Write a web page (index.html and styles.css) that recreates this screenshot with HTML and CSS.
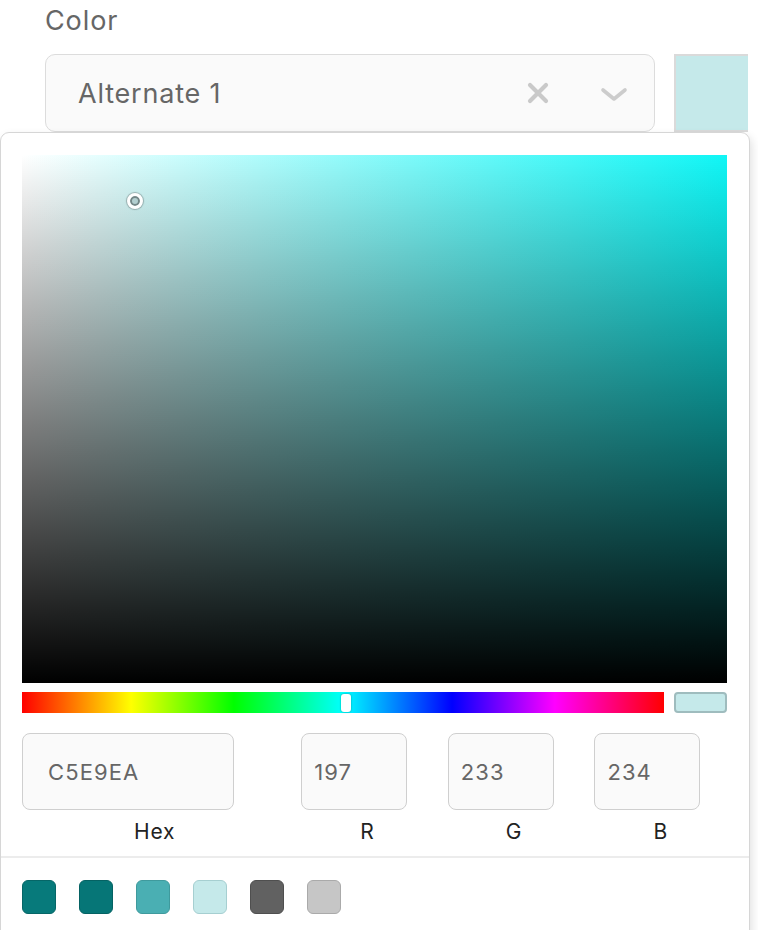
FILE: index.html
```html
<!DOCTYPE html>
<html lang="en">
<head>
  <meta charset="UTF-8" />
  <meta name="viewport" content="width=device-width, initial-scale=1.0"/>
  <title>Color Picker</title>
  <link rel="stylesheet" href="styles.css">
</head>
<body>

  <div class="field">
    <label class="field-label">Color</label>
    <div class="field-row">
      <div class="select">
        <span class="select-value">Alternate 1</span>
        <span class="select-icons">
          <svg class="icon-clear" width="22" height="22" viewBox="0 0 22 22">
            <path d="M3 3 L19 19 M19 3 L3 19" stroke="#c9c9c9" stroke-width="4.2" stroke-linecap="round" fill="none"/>
          </svg>
          <svg class="icon-chevron" width="28" height="16" viewBox="0 0 28 16">
            <path d="M3 3 L14 12 L25 3" stroke="#cccccc" stroke-width="3.6" stroke-linecap="round" stroke-linejoin="round" fill="none"/>
          </svg>
        </span>
      </div>
      <div class="current-swatch"></div>
    </div>
  </div>

  <div class="picker">
    <div class="picker-body">
      <div class="saturation">
        <div class="sat-cursor"></div>
      </div>

      <div class="hue-row">
        <div class="hue">
          <div class="hue-thumb"></div>
        </div>
        <div class="preview"></div>
      </div>

      <div class="inputs">
        <div class="input-col hex-col">
          <div class="input-box hex-box">C5E9EA</div>
          <div class="input-label">Hex</div>
        </div>
        <div class="input-col">
          <div class="input-box">197</div>
          <div class="input-label">R</div>
        </div>
        <div class="input-col">
          <div class="input-box">233</div>
          <div class="input-label">G</div>
        </div>
        <div class="input-col">
          <div class="input-box">234</div>
          <div class="input-label">B</div>
        </div>
      </div>
    </div>

    <div class="swatches">
      <div class="swatch" style="background:#077a7b;border-color:#066667"></div>
      <div class="swatch" style="background:#067677;border-color:#056263"></div>
      <div class="swatch" style="background:#4aafb3;border-color:#3f9a9d"></div>
      <div class="swatch" style="background:#c5e9ea;border-color:#a6cfd1"></div>
      <div class="swatch" style="background:#616161;border-color:#4f4f4f"></div>
      <div class="swatch" style="background:#c6c6c6;border-color:#aaaaaa"></div>
    </div>
  </div>

</body>
</html>
```

FILE: styles.css
```css
* {
  margin: 0;
  padding: 0;
  box-sizing: border-box;
}

body {
  font-family: 'Inter', 'Noto Sans', sans-serif;
  background-color: #fff;
  color: #222;
  overflow: hidden;
  position: relative;
  height: 930px;
}

.field {
  padding: 5px 0 0 45px;
}

.field-label {
  display: block;
  font-size: 27px;
  line-height: 32px;
  letter-spacing: 0.9px;
  color: #666;
}

.field-row {
  display: flex;
  margin-top: 17px;
}

.select {
  width: 610px;
  height: 78px;
  border: 1.5px solid #dcdcdc;
  border-radius: 10px;
  background: #fafafa;
  display: flex;
  align-items: center;
  justify-content: space-between;
  padding: 0 26px 0 32px;
}

.select-value {
  font-size: 27px;
  letter-spacing: 0.8px;
  color: #666;
}

.select-icons {
  display: flex;
  align-items: center;
  gap: 51px;
}

.icon-chevron {
  margin-top: 4px;
}

.current-swatch {
  width: 74px;
  height: 78px;
  margin-left: 19px;
  background: #c5e9ea;
  border: 2px solid #dadada;
  border-right: none;
}

/* popover */
.picker {
  position: absolute;
  top: 132px;
  left: 0;
  width: 750px;
  height: 820px;
  background: #fff;
  border: 1.5px solid #d6d6d6;
  border-radius: 9px 9px 0 0;
  box-shadow: 2px 4px 10px rgba(0,0,0,0.12);
}

.picker-body {
  padding: 22px 22px 0 21px;
  border-bottom: 2px solid #ececec;
}

.saturation {
  position: relative;
  height: 528px;
  background:
    linear-gradient(to top, #000, rgba(0,0,0,0)),
    linear-gradient(to right, #fff, #10f6f6);
}

.sat-cursor {
  position: absolute;
  left: calc(16% - 8px);
  top: calc(8.7% - 8px);
  width: 16px;
  height: 16px;
  border-radius: 50%;
  border: 3px solid #fff;
  background: #b3cfd0;
  box-shadow: inset 0 0 0 2px rgba(0,0,0,0.35), 0 0 1px 1px rgba(0,0,0,0.25);
}

.hue-row {
  display: flex;
  gap: 10px;
  margin-top: 9px;
  height: 21px;
}

.hue {
  position: relative;
  flex: 1;
  background: linear-gradient(to right, #f00 0%, #ff0 17%, #0f0 33%, #0ff 50%, #00f 67%, #f0f 83%, #f00 100%);
}

.hue-thumb {
  position: absolute;
  top: 2px;
  left: calc(50% - 2px);
  width: 10px;
  height: 18px;
  border-radius: 3px;
  background: #fff;
  box-shadow: 0 0 2px rgba(0,0,0,0.4);
}

.preview {
  width: 53px;
  background: #c5e9ea;
  border: 2px solid #9fbcbe;
  border-radius: 4px;
}

.inputs {
  display: flex;
  gap: 14px;
  margin-top: 20px;
  padding-bottom: 11px;
}

.input-col {
  flex: 1;
  display: flex;
  flex-direction: column;
}

.hex-col {
  flex: 2;
}

.input-box {
  width: 80%;
  height: 77px;
  border: 1.5px solid #cfcfcf;
  border-radius: 8px;
  background: #fafafa;
  display: flex;
  align-items: center;
  padding-left: 12px;
  font-size: 22px;
  letter-spacing: 1.1px;
  color: #666;
}

.hex-box {
  padding-left: 25px;
}

.input-label {
  text-align: center;
  font-size: 21px;
  line-height: 26px;
  letter-spacing: 0.8px;
  margin-top: 9px;
  color: #222;
}

.swatches {
  display: flex;
  gap: 23px;
  padding: 22px 21px;
}

.swatch {
  width: 34px;
  height: 34px;
  border-radius: 6px;
  border: 1.5px solid transparent;
}
```
